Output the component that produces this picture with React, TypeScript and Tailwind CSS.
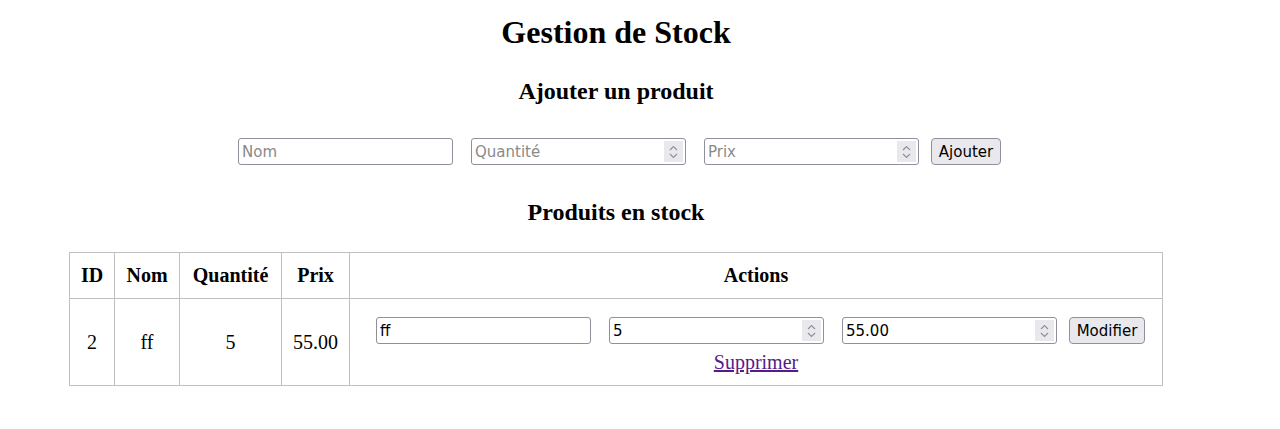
const ctrl = "font-['DejaVu_Sans',sans-serif] text-[15px]";

const Spinner = () => (
  <div className="w-[19px] self-stretch my-[2px] mr-[2px] bg-[#e9e9ed] flex items-center justify-center">
    <svg width="9" height="14" viewBox="0 0 9 14" fill="none" stroke="#8f8f9d" strokeWidth="1.2">
      <path d="M1 5 L4.5 1.5 L8 5" />
      <path d="M1 9 L4.5 12.5 L8 9" />
    </svg>
  </div>
);

const Field = ({ placeholder, value, number }: { placeholder?: string; value?: string; number?: boolean }) => (
  <div className="w-[215px] h-[27px] flex items-stretch border border-[#8f8f9d] rounded-[3px] bg-white">
    <input
      className={`${ctrl} flex-1 min-w-0 px-[3px] pt-[2px] text-black placeholder:text-[#8a8a8a] outline-none bg-transparent`}
      placeholder={placeholder}
      defaultValue={value}
    />
    {number && <Spinner />}
  </div>
);

const Btn = ({ label, w }: { label: string; w: string }) => (
  <button className={`${ctrl} ${w} h-[27px] pt-[2px] border border-[#8f8f9d] rounded-[4px] bg-[#e9e9ed] text-black`}>
    {label}
  </button>
);

export default function App() {
  return (
    <div className="w-[1232px] px-2 bg-white text-black text-center font-['Liberation_Serif',serif]">
      <h1 className="mt-[14px] text-[32px] leading-[37px] font-bold">Gestion de Stock</h1>
      <h2 className="mt-[26px] text-[24px] leading-[28px] font-bold">Ajouter un produit</h2>

      <div className="mt-[33px] pl-[7px] flex justify-center items-center">
        <Field placeholder="Nom" />
        <div className="ml-[18px]">
          <Field placeholder="Quantité" number />
        </div>
        <div className="ml-[18px]">
          <Field placeholder="Prix" number />
        </div>
        <div className="ml-[12px]">
          <Btn label="Ajouter" w="w-[70px]" />
        </div>
      </div>

      <h2 className="mt-[33px] text-[24px] leading-[28px] font-bold">Produits en stock</h2>

      <table className="mt-[26px] mx-auto w-[1094px] table-fixed border-collapse text-[20px] leading-[23px]">
        <thead>
          <tr className="h-[46px]">
            <th className="w-[45px] border border-[#c0c0c0]">ID</th>
            <th className="w-[65px] border border-[#c0c0c0]">Nom</th>
            <th className="w-[102px] border border-[#c0c0c0]">Quantité</th>
            <th className="w-[68px] border border-[#c0c0c0]">Prix</th>
            <th className="border border-[#c0c0c0]">Actions</th>
          </tr>
        </thead>
        <tbody>
          <tr className="h-[87px]">
            <td className="border border-[#c0c0c0]">2</td>
            <td className="border border-[#c0c0c0]">ff</td>
            <td className="border border-[#c0c0c0]">5</td>
            <td className="border border-[#c0c0c0]">55.00</td>
            <td className="border border-[#c0c0c0] pt-[18px] pb-[11px] align-top">
              <div className="pl-[9px] flex justify-center items-center">
                <Field value="ff" />
                <div className="ml-[18px]">
                  <Field value="5" number />
                </div>
                <div className="ml-[18px]">
                  <Field value="55.00" number />
                </div>
                <div className="ml-[12px]">
                  <Btn label="Modifier" w="w-[76px]" />
                </div>
              </div>
              <div className="mt-[7px]">
                <a href="#" className="text-[#551a8b] underline">Supprimer</a>
              </div>
            </td>
          </tr>
        </tbody>
      </table>
    </div>
  );
}
